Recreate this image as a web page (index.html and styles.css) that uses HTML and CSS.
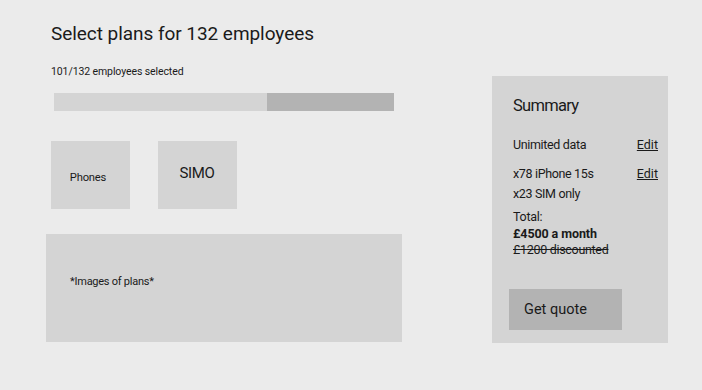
FILE: index.html
```html
<!DOCTYPE html>
<html lang="en">
<head>
  <meta charset="UTF-8" />
  <meta name="viewport" content="width=device-width, initial-scale=1.0" />
  <title>Select plans</title>
  <link rel="stylesheet" href="styles.css">
</head>
<body>
  <div class="page">
    <main class="main">
      <h1 class="title">Select plans for 132 employees</h1>
      <div class="progress-label">101/132 employees selected</div>
      <div class="progress">
        <div class="progress-done"></div>
        <div class="progress-left"></div>
      </div>
      <div class="tabs">
        <div class="tab tab-phones">Phones</div>
        <div class="tab tab-simo">SIMO</div>
      </div>
      <div class="plans">*Images of plans*</div>
    </main>

    <aside class="summary">
      <h2 class="summary-title">Summary</h2>
      <div class="row">
        <span>Unimited data</span>
        <a class="edit" href="#">Edit</a>
      </div>
      <div class="row row-group">
        <div>
          <div>x78 iPhone 15s</div>
          <div>x23 SIM only</div>
        </div>
        <a class="edit" href="#">Edit</a>
      </div>
      <div class="total">
        <div>Total:</div>
        <div class="price">£4500 a month</div>
        <div class="discount">£1200 discounted</div>
      </div>
      <button class="quote">Get quote</button>
    </aside>
  </div>
</body>
</html>
```

FILE: styles.css
```css
:root {
  --bg: #ebebeb;
  --box: #d4d4d4;
  --box-dark: #b3b3b3;
  --text: #1a1a1a;
}
* {
  box-sizing: border-box;
  margin: 0;
  padding: 0;
  font-family: Roboto, "Noto Sans", sans-serif;
}
body {
  background: var(--bg);
  color: var(--text);
  width: 702px;
  height: 390px;
  overflow: hidden;
}
.page {
  display: flex;
  gap: 90px;
  padding-left: 46px;
}
.main {
  width: 356px;
  padding-top: 22px;
}
.title {
  font-size: 19px;
  font-weight: 400;
  line-height: 24px;
  padding-left: 5px;
  letter-spacing: -0.05px;
}
.progress-label {
  font-size: 10.5px;
  line-height: 14px;
  margin-top: 19px;
  padding-left: 5px;
  letter-spacing: -0.1px;
}
.progress {
  display: flex;
  height: 18px;
  width: 340px;
  margin: 14px 0 0 8px;
}
.progress-done {
  width: 213px;
  background: var(--box);
}
.progress-left {
  flex: 1;
  background: var(--box-dark);
}
.tabs {
  display: flex;
  gap: 28px;
  margin: 30px 0 0 5px;
}
.tab {
  width: 79px;
  height: 68px;
  background: var(--box);
  display: flex;
  align-items: center;
  justify-content: center;
}
.tab-phones {
  font-size: 11.2px;
  padding: 4px 5px 0 0;
  letter-spacing: -0.2px;
}
.tab-simo {
  font-size: 15px;
  padding: 0 1px 4px 0;
  letter-spacing: -0.3px;
}
.plans {
  margin-top: 25px;
  height: 108px;
  background: var(--box);
  font-size: 11px;
  line-height: 14px;
  padding: 41px 0 0 24px;
  letter-spacing: -0.25px;
}
.summary {
  width: 176px;
  height: 267px;
  margin-top: 76px;
  background: var(--box);
  padding: 20px 10px 0 21px;
}
.summary-title {
  font-size: 16.5px;
  font-weight: 400;
  line-height: 20px;
  letter-spacing: -0.7px;
}
.row {
  display: flex;
  justify-content: space-between;
  font-size: 12.5px;
  line-height: 16px;
  margin-top: 21px;
  letter-spacing: -0.35px;
}
.row-group {
  line-height: 19.5px;
  margin-top: 11px;
}
.edit {
  color: var(--text);
  text-decoration: underline;
  letter-spacing: 0;
}
.total {
  font-size: 12.5px;
  line-height: 16.5px;
  margin-top: 6px;
  letter-spacing: -0.3px;
}
.price {
  font-weight: 700;
  letter-spacing: -0.1px;
}
.discount {
  text-decoration: line-through;
}
.quote {
  display: flex;
  align-items: center;
  width: 113px;
  height: 41px;
  margin: 30px 0 0 -4px;
  padding-left: 15px;
  border: none;
  background: var(--box-dark);
  color: var(--text);
  font-size: 14.5px;
  cursor: pointer;
}
```
